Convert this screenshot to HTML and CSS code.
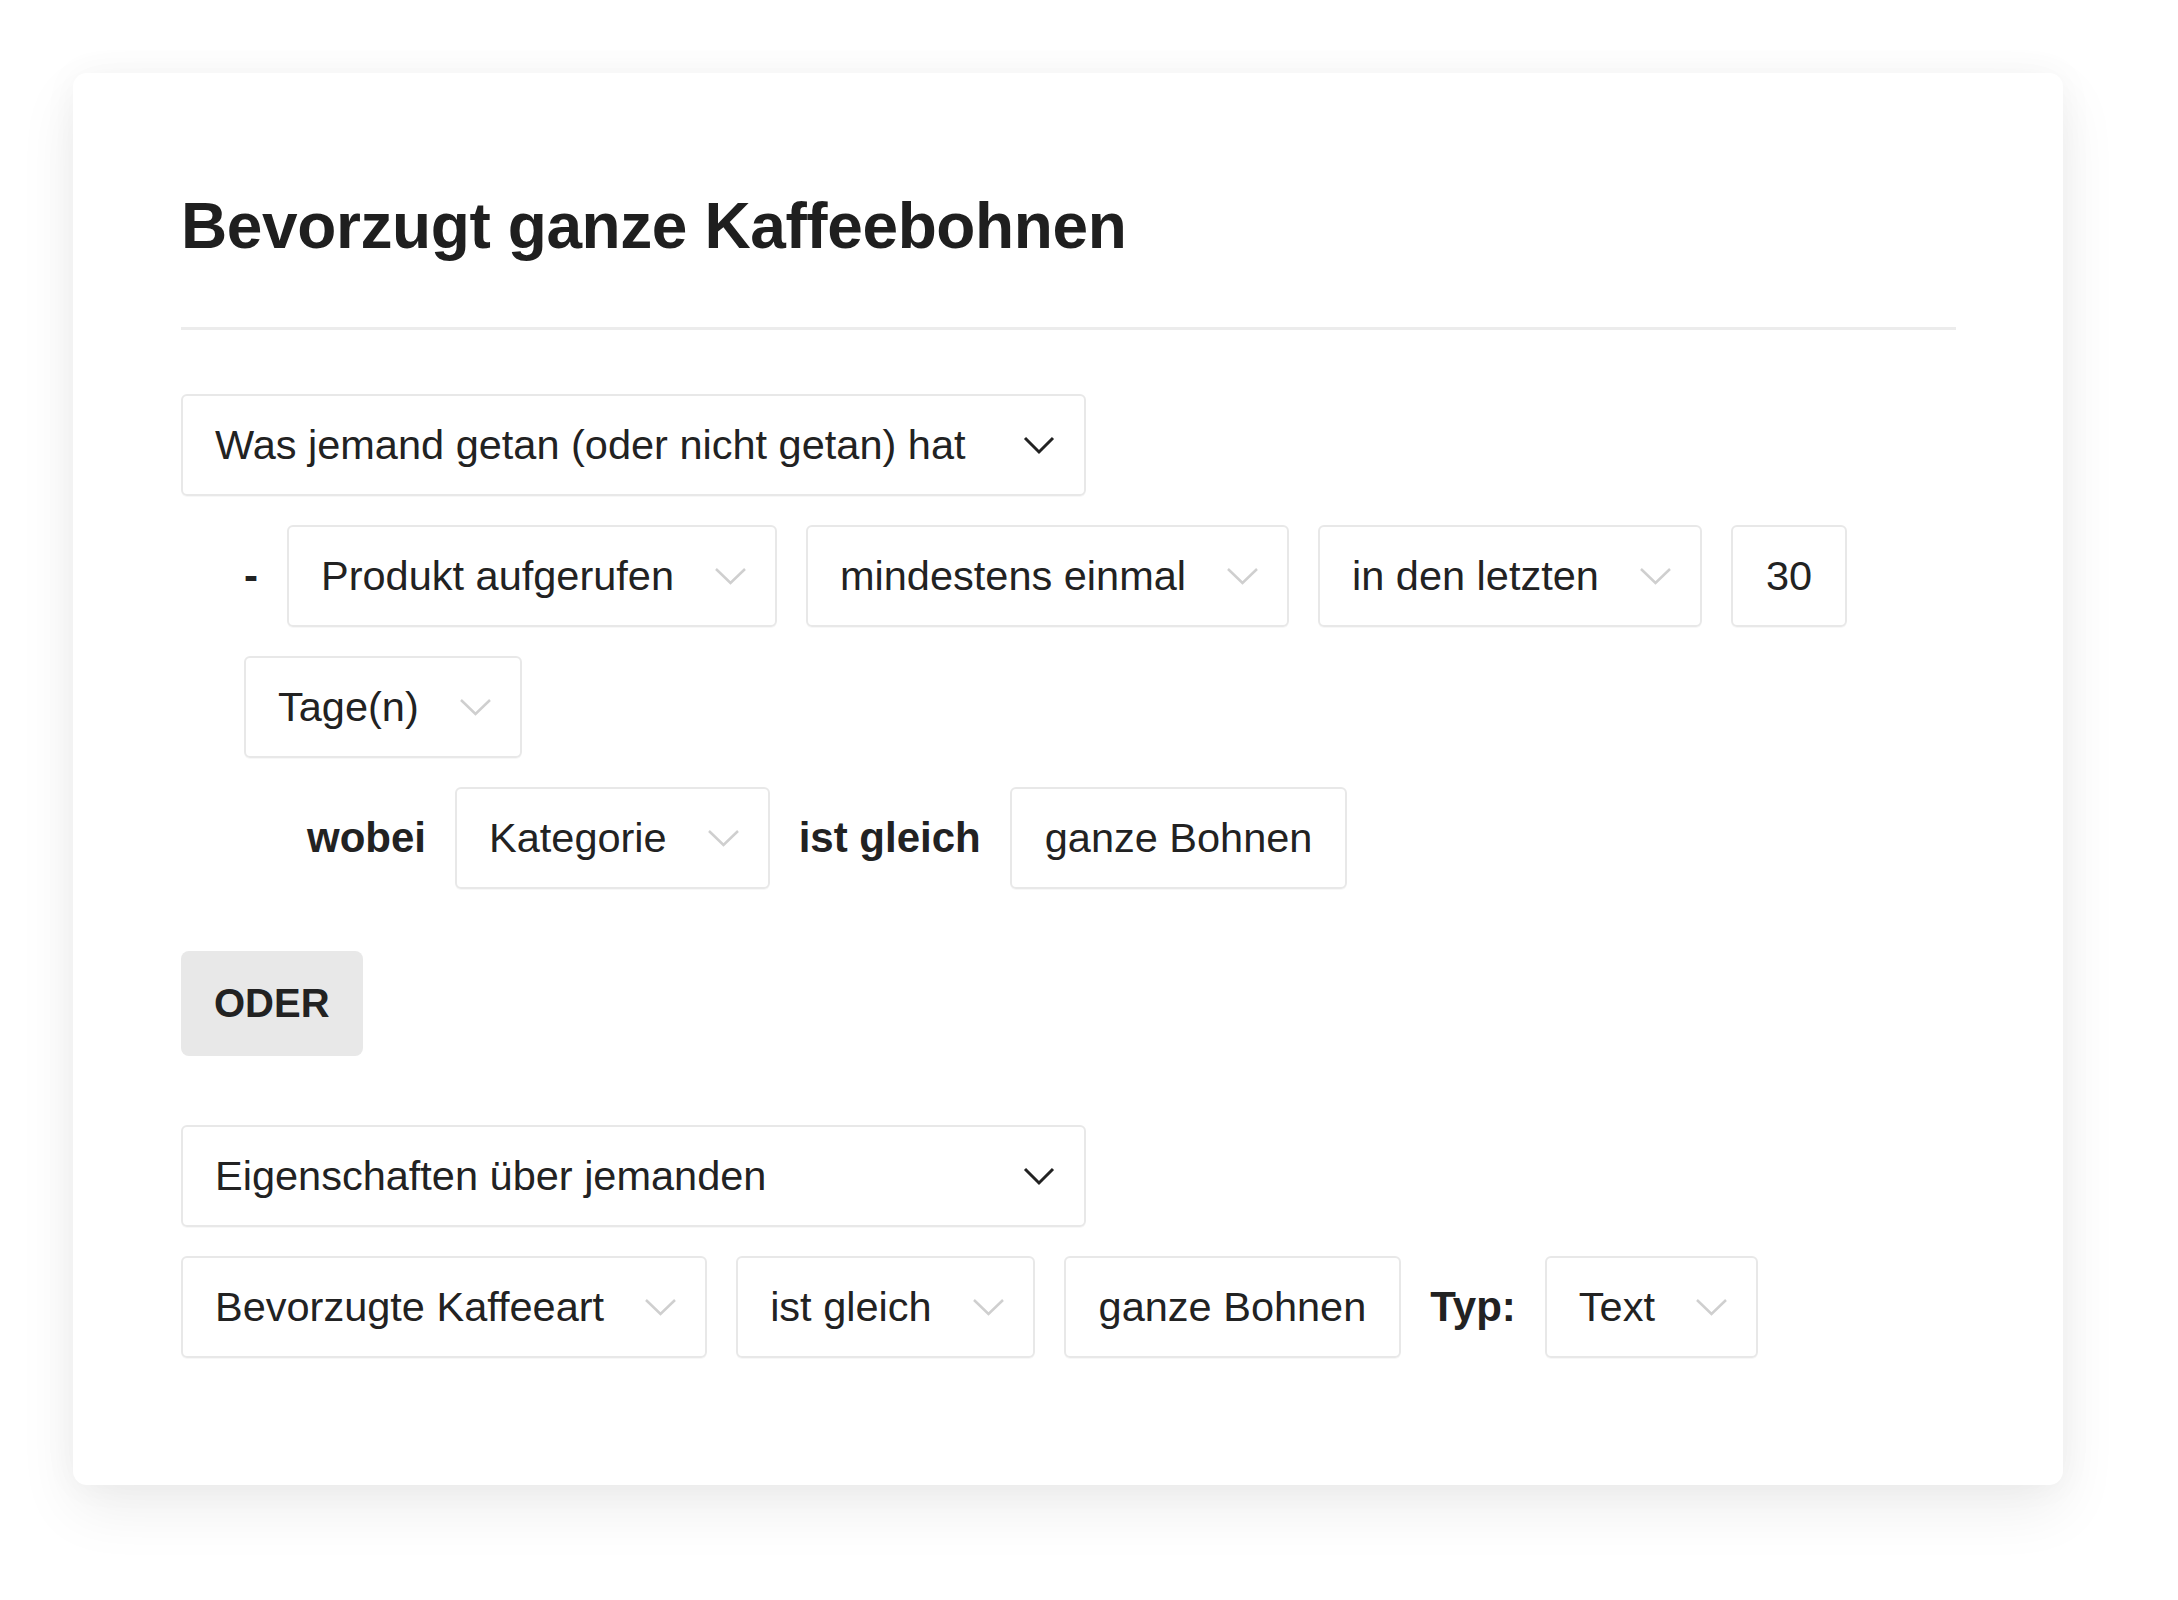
FILE: index.html
```html
<!DOCTYPE html>
<html lang="de">

<head>
    <meta charset="UTF-8">
    <meta name="viewport" content="width=device-width, initial-scale=1.0">
    <title>Segment</title>
    <link rel="stylesheet" href="styles.css">
</head>

<body>
    <div class="card">
        <h1 class="title">Bevorzugt ganze Kaffeebohnen</h1>
        <hr class="divider">

        <!-- Bedingung 1 -->
        <div class="select main">
            <span>Was jemand getan (oder nicht getan) hat</span>
            <svg class="chev" width="32" height="19" viewBox="0 0 32 19"><path d="M2 2 L16 16 L30 2"/></svg>
        </div>
        <div class="row sub">
            <span class="dash">-</span>
            <div class="select">
                <span>Produkt aufgerufen</span>
                <svg class="chev light" width="33" height="19" viewBox="0 0 33 19"><path d="M2 2 L16.5 16 L31 2"/></svg>
            </div>
            <div class="select">
                <span>mindestens einmal</span>
                <svg class="chev light" width="33" height="19" viewBox="0 0 33 19"><path d="M2 2 L16.5 16 L31 2"/></svg>
            </div>
            <div class="select">
                <span>in den letzten</span>
                <svg class="chev light" width="33" height="19" viewBox="0 0 33 19"><path d="M2 2 L16.5 16 L31 2"/></svg>
            </div>
            <div class="field">30</div>
            <div class="select">
                <span>Tage(n)</span>
                <svg class="chev light" width="33" height="19" viewBox="0 0 33 19"><path d="M2 2 L16.5 16 L31 2"/></svg>
            </div>
        </div>
        <div class="row where">
            <span class="label">wobei</span>
            <div class="select">
                <span>Kategorie</span>
                <svg class="chev light" width="33" height="19" viewBox="0 0 33 19"><path d="M2 2 L16.5 16 L31 2"/></svg>
            </div>
            <span class="label">ist gleich</span>
            <div class="field">ganze Bohnen</div>
        </div>

        <button class="or" type="button">ODER</button>

        <!-- Bedingung 2 -->
        <div class="select main">
            <span>Eigenschaften über jemanden</span>
            <svg class="chev" width="32" height="19" viewBox="0 0 32 19"><path d="M2 2 L16 16 L30 2"/></svg>
        </div>
        <div class="row props">
            <div class="select">
                <span>Bevorzugte Kaffeeart</span>
                <svg class="chev light" width="33" height="19" viewBox="0 0 33 19"><path d="M2 2 L16.5 16 L31 2"/></svg>
            </div>
            <div class="select">
                <span>ist gleich</span>
                <svg class="chev light" width="33" height="19" viewBox="0 0 33 19"><path d="M2 2 L16.5 16 L31 2"/></svg>
            </div>
            <div class="field">ganze Bohnen</div>
            <span class="label">Typ:</span>
            <div class="select">
                <span>Text</span>
                <svg class="chev light" width="33" height="19" viewBox="0 0 33 19"><path d="M2 2 L16.5 16 L31 2"/></svg>
            </div>
        </div>
    </div>
</body>

</html>
```

FILE: styles.css
```css
body {
    margin: 0;
    background-color: white;
    font-family: "Liberation Sans", Arial, sans-serif;
    color: #222;
}
.card {
    margin: 73px;
    width: 1990px;
    height: 1412px;
    box-sizing: border-box;
    padding: 108px 107px 0 108px;
    background-color: white;
    border-radius: 14px;
    box-shadow: 0 24px 60px rgba(0, 0, 0, 0.07), 0 0 36px rgba(0, 0, 0, 0.04);
}
.title {
    margin: 7px 0 0 0;
    font-size: 64px;
    line-height: 76px;
    font-weight: bold;
    letter-spacing: -0.4px;
    color: #1f1f1f;
}
.divider {
    margin: 63px 0 64px 0;
    border: 0;
    height: 3px;
    background-color: #ececec;
}
.row {
    display: flex;
    flex-wrap: wrap;
    align-items: center;
    gap: 29px;
}
.sub {
    margin-top: 29px;
    padding-left: 63px;
}
.where {
    margin-top: 29px;
    padding-left: 126px;
}
.props {
    margin-top: 29px;
}
.select,
.field {
    display: flex;
    align-items: center;
    box-sizing: border-box;
    height: 102px;
    border: 2px solid #e8e8e8;
    border-radius: 6px;
    box-shadow: 0 1px 0 rgba(0, 0, 0, 0.03);
    font-size: 41.5px;
    white-space: nowrap;
}
.select {
    gap: 40px;
    padding: 0 28px 0 32px;
}
.field {
    padding: 0 33px;
}
.main {
    width: 905px;
    justify-content: space-between;
    padding-right: 29px;
}
.chev {
    fill: none;
    stroke: #222;
    stroke-width: 3;
    flex-shrink: 0;
}
.chev.light {
    stroke: #cfcfcf;
    stroke-width: 2.5;
}
.dash {
    font-size: 42px;
    font-weight: bold;
    width: 14px;
}
.label {
    font-size: 42px;
    font-weight: bold;
}
.or {
    display: block;
    margin: 62px 0 69px 0;
    height: 105px;
    padding: 0 33px;
    border: 0;
    border-radius: 8px;
    background-color: #e8e8e8;
    font-family: "Liberation Sans", Arial, sans-serif;
    font-size: 40px;
    font-weight: bold;
    color: #222;
}
```
